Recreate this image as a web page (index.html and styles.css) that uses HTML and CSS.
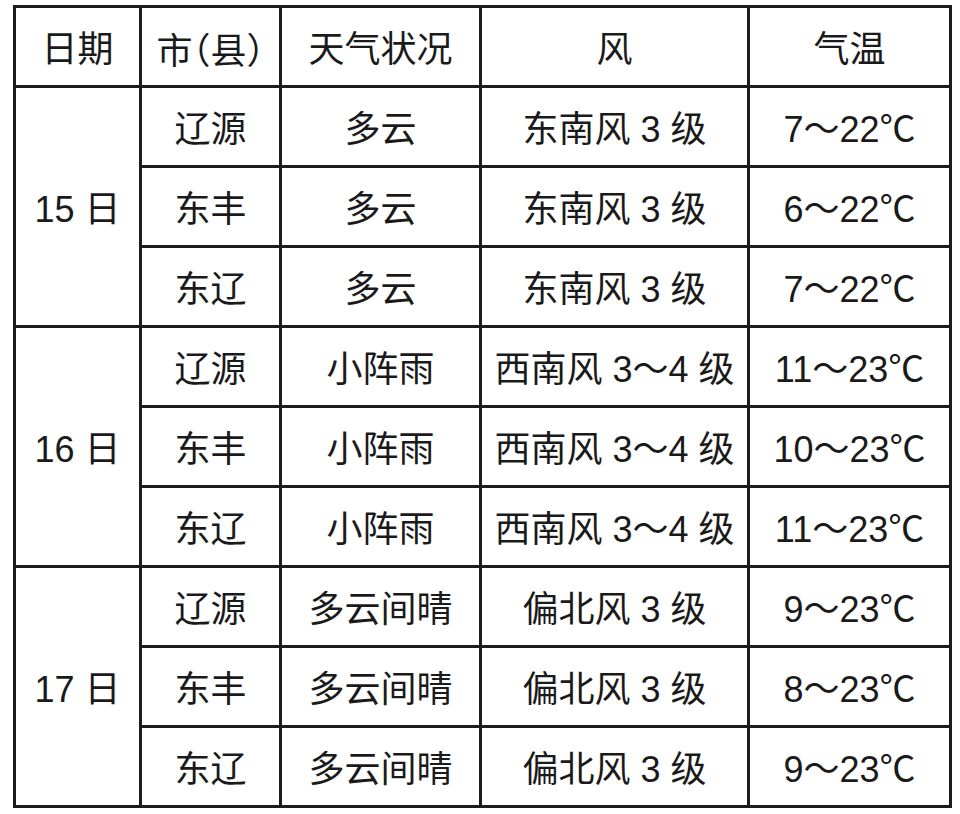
FILE: index.html
```html
<!DOCTYPE html>
<html lang="zh">
<head>
<meta charset="utf-8">
<link rel="stylesheet" href="styles.css">
</head>
<body>
<table class="weather">
  <colgroup>
    <col class="c-date"><col class="c-city"><col class="c-cond"><col class="c-wind"><col class="c-temp">
  </colgroup>
  <thead>
    <tr><th>日期</th><th><span class="halt">市（县）</span></th><th>天气状况</th><th>风</th><th>气温</th></tr>
  </thead>
  <tbody>
    <tr><td rowspan="3">15 日</td><td>辽源</td><td>多云</td><td>东南风 3 级</td><td>7～22℃</td></tr>
    <tr><td>东丰</td><td>多云</td><td>东南风 3 级</td><td>6～22℃</td></tr>
    <tr><td>东辽</td><td>多云</td><td>东南风 3 级</td><td>7～22℃</td></tr>
    <tr><td rowspan="3">16 日</td><td>辽源</td><td>小阵雨</td><td>西南风 3～4 级</td><td>11～23℃</td></tr>
    <tr><td>东丰</td><td>小阵雨</td><td>西南风 3～4 级</td><td>10～23℃</td></tr>
    <tr><td>东辽</td><td>小阵雨</td><td>西南风 3～4 级</td><td>11～23℃</td></tr>
    <tr><td rowspan="3">17 日</td><td>辽源</td><td>多云间晴</td><td>偏北风 3 级</td><td>9～23℃</td></tr>
    <tr><td>东丰</td><td>多云间晴</td><td>偏北风 3 级</td><td>8～23℃</td></tr>
    <tr><td>东辽</td><td>多云间晴</td><td>偏北风 3 级</td><td>9～23℃</td></tr>
  </tbody>
</table>
</body>
</html>
```
FILE: styles.css
```css
html, body {
  margin: 0;
  padding: 0;
  background: #ffffff;
}
body {
  padding: 5px 0 0 13px;
}
.weather {
  border-collapse: collapse;
  table-layout: fixed;
  width: 936px;
  font-family: "Liberation Sans", "Noto Sans CJK SC", sans-serif;
  font-size: 36px;
  color: #1a1a1a;
}
.c-date { width: 126px; }
.c-city { width: 140px; }
.c-cond { width: 200px; }
.c-wind { width: 268px; }
.c-temp { width: 202px; }
.weather th,
.weather td {
  border: 3px solid #1c1c1c;
  height: 71px;
  padding: 6px 0 0 0;
  text-align: center;
  vertical-align: middle;
  font-weight: normal;
  white-space: nowrap;
  line-height: 1;
}
.halt {
  font-family: "Noto Sans CJK SC", sans-serif;
  font-feature-settings: "halt";
}
```
